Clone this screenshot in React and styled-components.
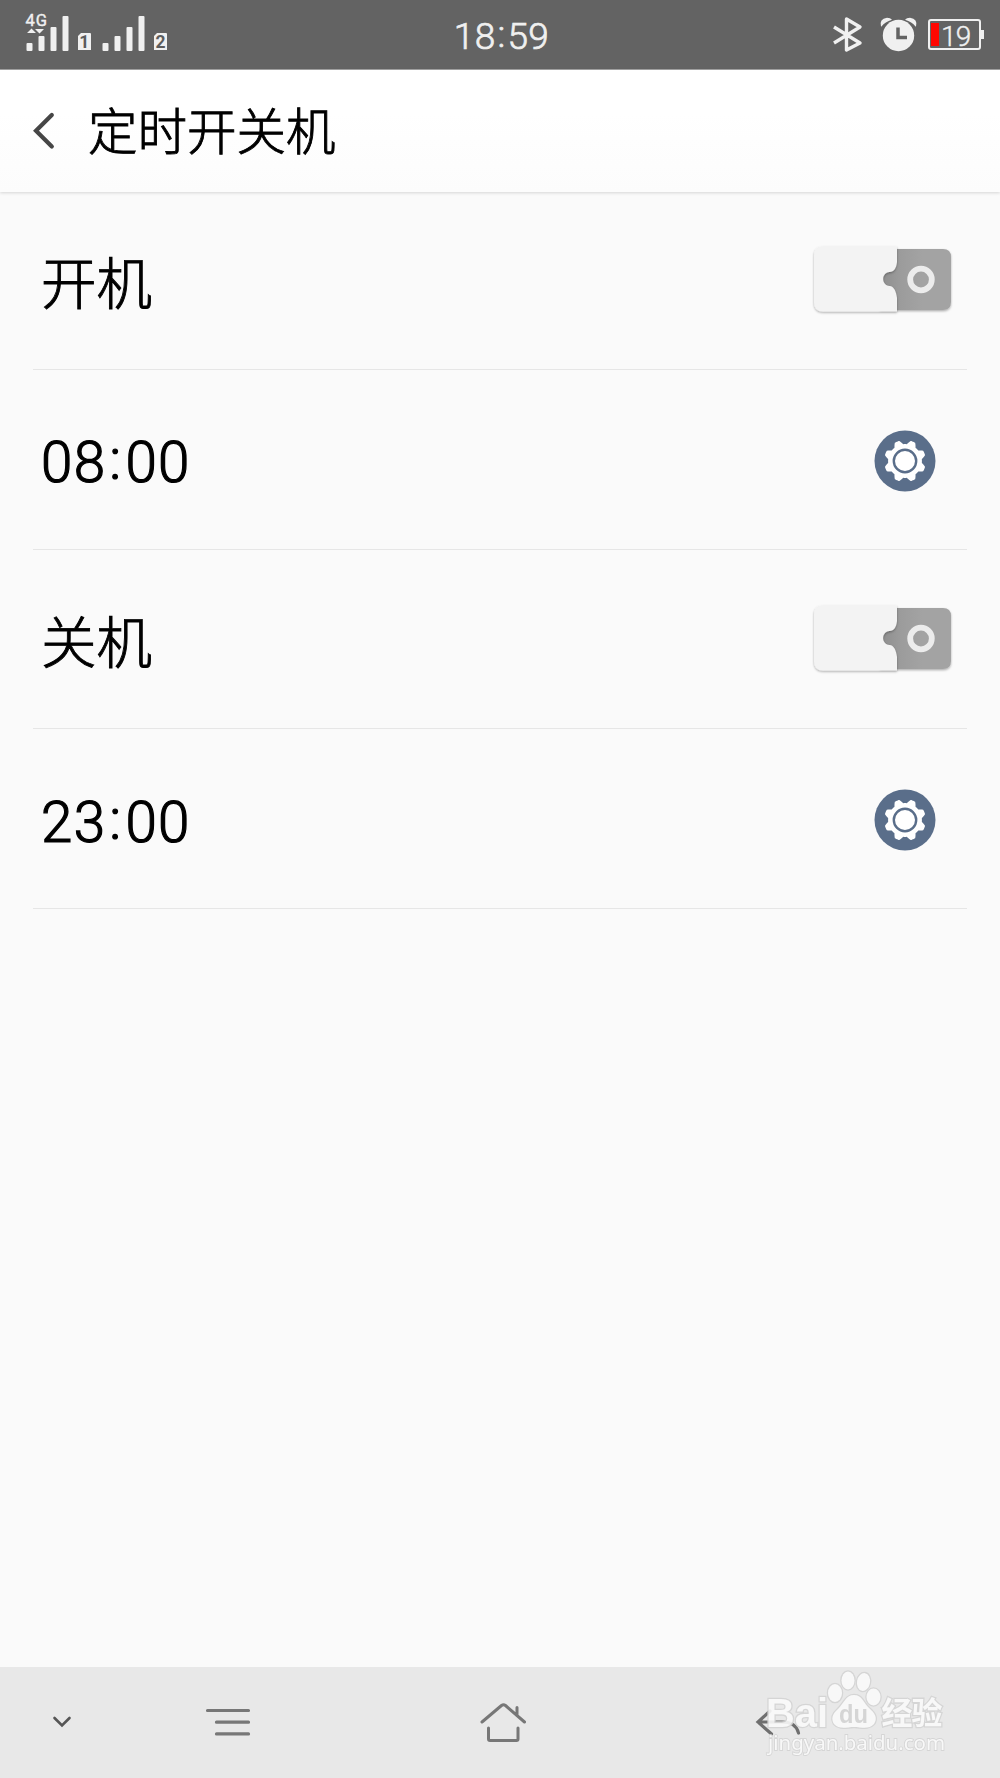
import React from "react";
import styled, { createGlobalStyle } from "styled-components";

const GlobalStyle = createGlobalStyle`
    * {
        box-sizing: border-box;
    }

    body {
        margin: 0;
        background: #fafafa;
        color: #000;
        font-family: Roboto, "Noto Sans CJK SC", sans-serif;
    }

    svg {
        display: block;
        overflow: visible;
    }
`;

const Screen = styled.div`
    display: flex;
    flex-direction: column;
    width: 1000px;
    height: 1778px;
    overflow: hidden;
    background: #fafafa;
`;

const StatusBar = styled.header`
    display: grid;
    grid-template-columns: 1fr auto 1fr;
    flex: none;
    height: 70px;
    padding: 0 16px 0 26px;
    background: #636363;
    border-bottom: 1px solid #a3a3a3;
    color: #f0f0f0;
`;

const Clock = styled.time`
    padding-top: 16px;
    padding-right: 7px;
    font-size: 37px;
    font-weight: 300;
    line-height: 42px;
    letter-spacing: 0.4px;
    -webkit-text-stroke: 0.7px #f0f0f0;
`;

const Colon = styled.span`
    margin: 0 0.05em;
    vertical-align: ${({ $lift }) => $lift}px;
    line-height: 0;
`;

const StatusIcons = styled.div`
    display: flex;
    justify-content: flex-end;
    align-items: flex-start;
    padding-top: 17px;
`;

const AlarmSlot = styled.div`
    margin: 0 11px 0 18px;
`;

const Battery = styled.div`
    display: flex;
    width: 53px;
    height: 31px;
    margin-top: 2px;
    padding: 2px 1px;
    border: 2.5px solid #f0f0f0;
    border-radius: 3px;
    font-size: 28px;
    font-weight: 300;
    line-height: 27px;
    letter-spacing: -0.8px;
    -webkit-text-stroke: 0.4px #f0f0f0;
`;

const BatteryLevel = styled.span`
    width: 8px;
    height: 23px;
    margin-right: 2px;
    background: #ff0600;
`;

const BatteryTip = styled.span`
    width: 3px;
    height: 9px;
    margin-top: 13px;
    background: #f0f0f0;
`;

const TitleBar = styled.div`
    display: flex;
    flex: none;
    height: 122px;
    padding-left: 33px;
    background: linear-gradient(#fff 35%, #fcfcfc);
    box-shadow: 0 1px 3px rgba(0, 0, 0, 0.15);
`;

const BackButton = styled.button`
    width: 55px;
    padding: 42px 0 0;
    border: 0;
    background: none;
    align-self: flex-start;
`;

const Title = styled.h1`
    margin: 23px 0 0;
    font-size: 49.5px;
    font-weight: 300;
    line-height: 72px;
    font-family: "Noto Sans CJK SC", sans-serif;
    -webkit-text-stroke: 0.9px #000;
`;

const List = styled.main`
    flex: 1;
    margin: -1.5px 33px 0;
`;

const Row = styled.div`
    display: flex;
    align-items: center;
    justify-content: space-between;
    height: 179.6px;
    padding: 0 ${({ $right }) => $right}px 0 8px;
    border-bottom: 1px solid #e6e6e6;
`;

const Label = styled.span`
    font-family: "Noto Sans CJK SC", sans-serif;
    font-size: 55.5px;
    font-weight: 300;
    line-height: 80px;
    -webkit-text-stroke: 0.9px #000;
`;

const Time = styled.time`
    padding-top: 8px;
    font-size: 56.5px;
    font-weight: 300;
    line-height: 64px;
    letter-spacing: 1.4px;
    -webkit-text-stroke: 1.2px #000;
`;

const ToggleSlot = styled.div`
    padding-bottom: 1px;
`;

const GearSlot = styled.div`
    padding-top: 3px;
`;

const NavBar = styled.nav`
    display: grid;
    grid-template-columns: 90px 275px 275px 275px;
    align-items: center;
    justify-items: center;
    flex: none;
    height: 111px;
    padding-bottom: 2px;
    background: #e8e8e8;
    position: relative;
`;

const CollapseSlot = styled.div`
    padding-left: 33px;
`;

const Watermark = styled.svg`
    position: absolute;
    left: 755px;
    top: -2px;
`;

const SignalIcon = () => (
    <svg width="150" height="69" viewBox="26 0 150 69" fill="#f0f0f0">
        <text x="25.5" y="26" fontSize="16.5" stroke="#f0f0f0" strokeWidth="0.4" textLength="21.5">4G</text>
        <path d="M27 33l4.5-4.5L36 33zM35 29h9l-4.5 4.5z" />
        <rect x="26.5" y="43" width="6" height="8" rx="1" />
        <rect x="38.5" y="36" width="6" height="15" rx="1" />
        <rect x="50.5" y="27" width="6" height="24" rx="1" />
        <rect x="62.5" y="16" width="6" height="35" rx="1" />
        <path d="M81 33h9q1 0 1 1v16H78V36z" />
        <text x="84.2" y="48" fontSize="17.5" fontWeight="bold" fill="#5c5c5c" textAnchor="middle">1</text>
        <rect x="102.5" y="43" width="6" height="8" rx="1" />
        <rect x="114.5" y="36" width="6" height="15" rx="1" />
        <rect x="126.5" y="27" width="6" height="24" rx="1" />
        <rect x="138.5" y="16" width="6" height="35" rx="1" />
        <path d="M157 33h9q1 0 1 1v16h-13V36z" />
        <text x="160.6" y="48" fontSize="17.5" fontWeight="bold" fill="#5c5c5c" textAnchor="middle">2</text>
    </svg>
);

const BluetoothIcon = () => (
    <svg width="29" height="35" viewBox="0 0 29 35" fill="none" stroke="#f0f0f0" strokeWidth="3.4">
        <path d="M1 10l26 16-13.5 7V2L27 10 1 26" strokeLinejoin="round" />
    </svg>
);

const AlarmIcon = () => (
    <svg width="37" height="35" viewBox="0 0 37 35">
        <path d="M1 9.500Q-1 2 7 .8q3.500 0 5 2Q5 5 1.500 9.500zM36 9.500Q38 2 30 .8q-3.500 0-5 2Q32 5 35.500 9.500z" fill="#f0f0f0" />
        <circle cx="18.5" cy="18.5" r="15.7" fill="#f0f0f0" />
        <path d="M18 10.500V20.500H27" fill="none" stroke="#636363" strokeWidth="3.5" />
    </svg>
);

const BackIcon = () => (
    <svg width="22" height="38" viewBox="0 0 22 38" fill="none" stroke="#464646" strokeWidth="4.2" strokeLinecap="round">
        <path d="M18.800 3L3 18.800 18.800 34.500" />
    </svg>
);

const Toggle = ({ id }) => (
    <svg width="141" height="70" viewBox="812 244 141 70">
        <defs>
            <linearGradient id={`${id}-shade`}>
                <stop offset="0" stopColor="#8d8d8d" />
                <stop offset="0.3" stopColor="#9c9c9c" />
                <stop offset="0.6" stopColor="#a3a3a3" />
            </linearGradient>
            <filter id={`${id}-shadow`} x="-10%" y="-10%" width="120%" height="130%">
                <feDropShadow dx="0" dy="1.2" stdDeviation="1.1" floodOpacity="0.32" />
            </filter>
        </defs>
        <path
            d="M880 249H943Q951 249 951 257V302Q951 310 943 310H880Z"
            fill={`url(#${id}-shade)`}
            filter={`url(#${id}-shadow)`}
        />
        <path
            d="M823 246.500H897V262C896 269 894 271.500 889.500 272C881 273 881 285 889.500 286C894 286.500 896 291 897 298V311.500H823Q814 311.500 814 302.500V255.500Q814 246.500 823 246.500Z"
            fill="#f3f3f3"
            filter={`url(#${id}-shadow)`}
        />
        <circle cx="921" cy="279.5" r="10.8" fill="none" stroke="#ececec" strokeWidth="5.8" />
    </svg>
);

// eight soft teeth, none of them pointing straight up
const gearPoints = Array.from({ length: 160 }, (_, i) => {
    const angle = (i / 160) * Math.PI * 2;
    const wave = Math.max(-1, Math.min(1, -1.6 * Math.cos(angle * 8)));
    const radius = 18.9 + wave * 2;
    return `${(31 + radius * Math.cos(angle)).toFixed(2)},${(31 + radius * Math.sin(angle)).toFixed(2)}`;
}).join(" ");

const GearIcon = () => (
    <svg width="62" height="62" viewBox="0 0 62 62">
        <circle cx="31" cy="31" r="30.5" fill="#5a6e8a" />
        <polygon points={gearPoints} fill="#fff" strokeLinejoin="round" />
        <circle cx="31" cy="31" r="11.2" fill="#fff" stroke="#5a6e8a" strokeWidth="2.4" />
    </svg>
);

const CollapseIcon = () => (
    <svg width="18" height="12" viewBox="0 0 18 12" fill="none" stroke="#555" strokeWidth="2.6" strokeLinecap="round">
        <path d="M1.500 2L9 9.500 16.500 2" />
    </svg>
);

const MenuIcon = () => (
    <svg width="44" height="28" viewBox="0 0 44 28" fill="none" stroke="#777" strokeWidth="3.2" strokeLinecap="round">
        <path d="M1.500 2.500H42.500M10.500 14.200H42.500M10.500 25.900H42.500" />
    </svg>
);

const HomeIcon = () => (
    <svg width="46" height="40" viewBox="0 0 46 40" fill="none" stroke="#777" strokeWidth="3" strokeLinecap="round" strokeLinejoin="round">
        <path d="M2 20L21.500 3.500Q23.500 2 25.500 3.500L44.500 20M37 13V5.500M8.500 26V37Q8.500 38.500 10 38.500H36.500Q38 38.500 38 37V26" />
    </svg>
);

const ReturnIcon = () => (
    <svg width="44" height="28" viewBox="0 0 44 28" fill="none" stroke="#6f6f6f" strokeWidth="3.2" strokeLinecap="round">
        <path d="M14 3L2 14 15.500 26M2 14H26Q40 14 42.500 25" />
    </svg>
);

const BaiduMark = () => (
    <Watermark width="210" height="100" viewBox="755 1665 210 100" fill="#fafafa" stroke="#d4d4d4" strokeWidth="2.6" paintOrder="stroke" opacity="0.9">
        <text x="766" y="1727" fontSize="40" fontWeight="bold" fontFamily="Liberation Sans, sans-serif" textLength="62" lengthAdjust="spacingAndGlyphs">Bai</text>
        <ellipse cx="835" cy="1693" rx="7" ry="9" />
        <ellipse cx="848" cy="1680.5" rx="6.5" ry="9" />
        <ellipse cx="863.5" cy="1682" rx="6.5" ry="9" transform="rotate(10 863.5 1682)" />
        <ellipse cx="873.5" cy="1697" rx="7" ry="8.5" />
        <path d="M854 1695C846 1695 844 1703 838 1709C832 1714 831 1719 834 1724C839 1730 847 1727 854 1727C861 1727 869 1730 874 1724C878 1718 875 1713 869 1708C863 1702 862 1695 854 1695Z" />
        <text x="839" y="1723" fontSize="26" fontWeight="bold" fontFamily="Liberation Sans, sans-serif" fill="#d4d4d4" stroke="none" textLength="29" lengthAdjust="spacingAndGlyphs">du</text>
        <text x="881.5" y="1723.5" fontSize="31" fontWeight="bold" fontFamily="Noto Sans CJK SC, sans-serif" textLength="61">经验</text>
        <text x="768" y="1750" fontSize="20.5" fontFamily="Noto Sans, sans-serif" textLength="177" lengthAdjust="spacingAndGlyphs" strokeWidth="1.8">jingyan.baidu.com</text>
    </Watermark>
);

const schedule = [
    { id: "on", label: "开机", hour: "08", minute: "00" },
    { id: "off", label: "关机", hour: "23", minute: "00" },
];

export default function App() {
    return (
        <Screen>
            <GlobalStyle />
            <StatusBar>
                <SignalIcon />
                <Clock>18<Colon $lift={2}>:</Colon>59</Clock>
                <StatusIcons>
                    <BluetoothIcon />
                    <AlarmSlot><AlarmIcon /></AlarmSlot>
                    <Battery><BatteryLevel />19</Battery>
                    <BatteryTip />
                </StatusIcons>
            </StatusBar>
            <TitleBar>
                <BackButton aria-label="返回"><BackIcon /></BackButton>
                <Title>定时开关机</Title>
            </TitleBar>
            <List>
                {schedule.map(({ id, label, hour, minute }) => (
                    <React.Fragment key={id}>
                        <Row $right={14}>
                            <Label>{label}</Label>
                            <ToggleSlot><Toggle id={id} /></ToggleSlot>
                        </Row>
                        <Row $right={31}>
                            <Time>{hour}<Colon $lift={3}>:</Colon>{minute}</Time>
                            <GearSlot><GearIcon /></GearSlot>
                        </Row>
                    </React.Fragment>
                ))}
            </List>
            <NavBar>
                <CollapseSlot><CollapseIcon /></CollapseSlot>
                <MenuIcon />
                <HomeIcon />
                <ReturnIcon />
                <BaiduMark />
            </NavBar>
        </Screen>
    );
}
